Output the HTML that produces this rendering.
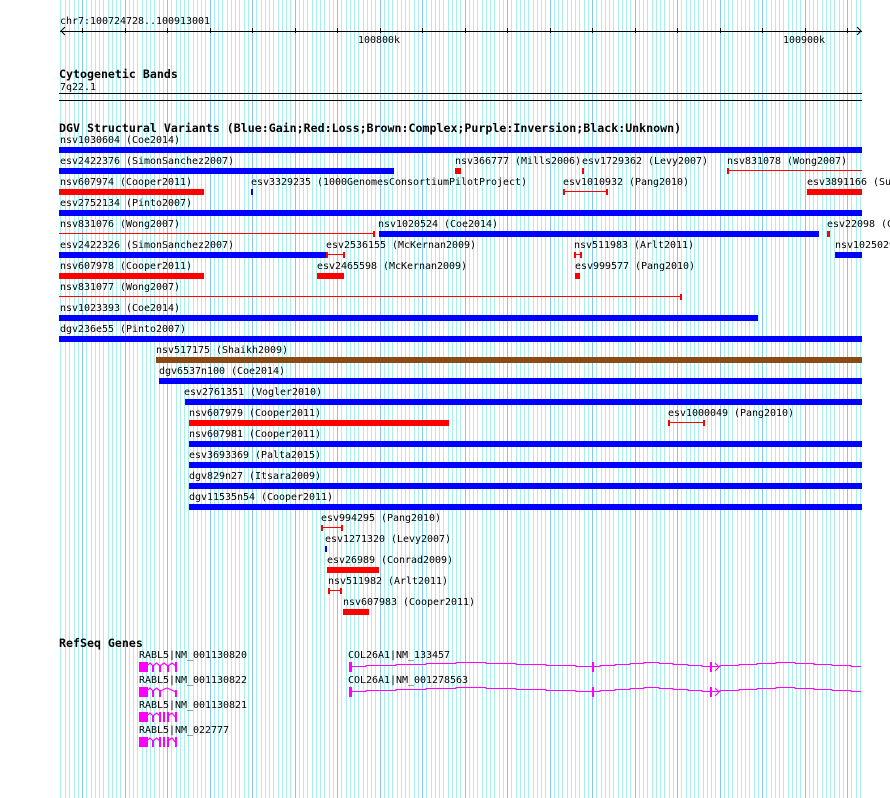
<!DOCTYPE html>
<html><head><meta charset="utf-8"><title>Genome tracks</title>
<style>
html,body{margin:0;padding:0;background:#fff;width:890px;height:798px;overflow:hidden}
svg{display:block}
text{font-family:"DejaVu Sans Mono","Liberation Mono",monospace;font-size:10px;letter-spacing:-.02px;fill:#000;white-space:pre}
text.b{font-weight:bold;font-size:11.6px;letter-spacing:.01px}
rect{shape-rendering:crispEdges}
.g{fill:none;stroke:#f0f;stroke-width:1;shape-rendering:crispEdges}
</style></head><body>
<svg xmlns="http://www.w3.org/2000/svg" width="890" height="798" viewBox="0 0 890 798">
<path fill="none" stroke="#aaeeee" stroke-width="1" shape-rendering="crispEdges" d="M60.5 0V798M65.5 0V798M69.5 0V798M74.5 0V798M78.5 0V798M86.5 0V798M91.5 0V798M95.5 0V798M99.5 0V798M103.5 0V798M108.5 0V798M112.5 0V798M116.5 0V798M120.5 0V798M129.5 0V798M133.5 0V798M137.5 0V798M142.5 0V798M146.5 0V798M150.5 0V798M154.5 0V798M159.5 0V798M163.5 0V798M171.5 0V798M176.5 0V798M180.5 0V798M184.5 0V798M188.5 0V798M193.5 0V798M197.5 0V798M201.5 0V798M205.5 0V798M214.5 0V798M218.5 0V798M222.5 0V798M227.5 0V798M231.5 0V798M235.5 0V798M239.5 0V798M244.5 0V798M248.5 0V798M256.5 0V798M261.5 0V798M265.5 0V798M269.5 0V798M273.5 0V798M278.5 0V798M282.5 0V798M286.5 0V798M290.5 0V798M299.5 0V798M303.5 0V798M307.5 0V798M312.5 0V798M316.5 0V798M320.5 0V798M324.5 0V798M329.5 0V798M333.5 0V798M341.5 0V798M346.5 0V798M350.5 0V798M354.5 0V798M358.5 0V798M363.5 0V798M367.5 0V798M371.5 0V798M375.5 0V798M384.5 0V798M388.5 0V798M392.5 0V798M397.5 0V798M401.5 0V798M405.5 0V798M409.5 0V798M414.5 0V798M418.5 0V798M426.5 0V798M431.5 0V798M435.5 0V798M439.5 0V798M443.5 0V798M448.5 0V798M452.5 0V798M456.5 0V798M460.5 0V798M469.5 0V798M473.5 0V798M477.5 0V798M482.5 0V798M486.5 0V798M490.5 0V798M494.5 0V798M499.5 0V798M503.5 0V798M511.5 0V798M516.5 0V798M520.5 0V798M524.5 0V798M528.5 0V798M533.5 0V798M537.5 0V798M541.5 0V798M545.5 0V798M554.5 0V798M558.5 0V798M562.5 0V798M567.5 0V798M571.5 0V798M575.5 0V798M579.5 0V798M584.5 0V798M588.5 0V798M596.5 0V798M601.5 0V798M605.5 0V798M609.5 0V798M613.5 0V798M618.5 0V798M622.5 0V798M626.5 0V798M630.5 0V798M639.5 0V798M643.5 0V798M647.5 0V798M652.5 0V798M656.5 0V798M660.5 0V798M664.5 0V798M669.5 0V798M673.5 0V798M681.5 0V798M686.5 0V798M690.5 0V798M694.5 0V798M698.5 0V798M703.5 0V798M707.5 0V798M711.5 0V798M715.5 0V798M724.5 0V798M728.5 0V798M732.5 0V798M737.5 0V798M741.5 0V798M745.5 0V798M749.5 0V798M754.5 0V798M758.5 0V798M766.5 0V798M771.5 0V798M775.5 0V798M779.5 0V798M783.5 0V798M788.5 0V798M792.5 0V798M796.5 0V798M800.5 0V798M809.5 0V798M813.5 0V798M817.5 0V798M822.5 0V798M826.5 0V798M830.5 0V798M834.5 0V798M839.5 0V798M843.5 0V798M851.5 0V798M856.5 0V798M860.5 0V798"/>
<path fill="none" stroke="#87c5f5" stroke-width="1" shape-rendering="crispEdges" d="M82.5 0V798M125.5 0V798M167.5 0V798M210.5 0V798M252.5 0V798M295.5 0V798M337.5 0V798M380.5 0V798M422.5 0V798M465.5 0V798M507.5 0V798M550.5 0V798M592.5 0V798M635.5 0V798M677.5 0V798M720.5 0V798M762.5 0V798M805.5 0V798M847.5 0V798"/>

<!-- axis -->
<text x="60" y="24">chr7:100724728..100913001</text>
<rect x="60" y="31" width="802" height="1" fill="#000"/>
<path d="M65 27L61 31L65 35M857 27L861 31L857 35" fill="none" stroke="#000" stroke-width="1"/>
<path d="M82.5 28v5M125.5 28v5M167.5 28v5M210.5 28v5M252.5 28v5M295.5 28v5M337.5 28v5M380.5 28v5M422.5 28v5M465.5 28v5M507.5 28v5M550.5 28v5M592.5 28v5M635.5 28v5M677.5 28v5M720.5 28v5M762.5 28v5M805.5 28v5M847.5 28v5" stroke="#000" stroke-width="1" shape-rendering="crispEdges"/>
<text x="358" y="43">100800k</text>
<text x="783" y="43">100900k</text>

<text class="b" x="59" y="78">Cytogenetic Bands</text>
<text x="60" y="90">7q22.1</text>
<rect x="59" y="93" width="803" height="1" fill="#000"/>
<rect x="59" y="100" width="803" height="1" fill="#000"/>
<text class="b" x="59" y="132">DGV Structural Variants (Blue:Gain;Red:Loss;Brown:Complex;Purple:Inversion;Black:Unknown)</text>

<!-- row 147 -->
<text x="60" y="143">nsv1030604 (Coe2014)</text>
<rect x="59" y="147" width="803" height="6" fill="#00f"/>
<!-- row 168 -->
<text x="60" y="164">esv2422376 (SimonSanchez2007)</text>
<rect x="59" y="168" width="335" height="6" fill="#00f"/>
<text x="455" y="164">nsv366777 (Mills2006)</text>
<rect x="455" y="168" width="6" height="6" fill="#f00"/>
<text x="582" y="164">esv1729362 (Levy2007)</text>
<rect x="582" y="168" width="2" height="6" fill="#f00"/>
<text x="727" y="164">nsv831078 (Wong2007)</text>
<rect x="727" y="168" width="2" height="6" fill="#f00"/>
<rect x="727" y="170" width="135" height="1" fill="#f00"/>
<!-- row 189 -->
<text x="60" y="185">nsv607974 (Cooper2011)</text>
<rect x="59" y="189" width="145" height="6" fill="#f00"/>
<text x="251" y="185">esv3329235 (1000GenomesConsortiumPilotProject)</text>
<rect x="251" y="189" width="2" height="6" fill="#00f"/>
<text x="563" y="185">esv1010932 (Pang2010)</text>
<rect x="563" y="189" width="2" height="6" fill="#f00"/>
<rect x="563" y="191" width="45" height="1" fill="#f00"/>
<rect x="606" y="189" width="2" height="6" fill="#f00"/>
<text x="807" y="185">esv3891166 (Su</text>
<rect x="807" y="189" width="55" height="6" fill="#f00"/>
<!-- row 210 -->
<text x="60" y="206">esv2752134 (Pinto2007)</text>
<rect x="59" y="210" width="803" height="6" fill="#00f"/>
<!-- row 231 -->
<text x="60" y="227">nsv831076 (Wong2007)</text>
<rect x="59" y="233" width="316" height="1" fill="#f00"/>
<rect x="373" y="231" width="2" height="6" fill="#f00"/>
<text x="378" y="227">nsv1020524 (Coe2014)</text>
<rect x="379" y="231" width="440" height="6" fill="#00f"/>
<text x="827" y="227">esv22098 (C</text>
<rect x="827" y="231" width="3" height="6" fill="#f00"/>
<!-- row 252 -->
<text x="60" y="248">esv2422326 (SimonSanchez2007)</text>
<rect x="59" y="252" width="267" height="6" fill="#00f"/>
<text x="326" y="248">esv2536155 (McKernan2009)</text>
<rect x="326" y="252" width="2" height="6" fill="#f00"/>
<rect x="326" y="254" width="19" height="1" fill="#f00"/>
<rect x="343" y="252" width="2" height="6" fill="#f00"/>
<text x="574" y="248">nsv511983 (Arlt2011)</text>
<rect x="574" y="252" width="2" height="6" fill="#f00"/>
<rect x="574" y="254" width="8" height="1" fill="#f00"/>
<rect x="580" y="252" width="2" height="6" fill="#f00"/>
<text x="835" y="248">nsv1025029</text>
<rect x="835" y="252" width="27" height="6" fill="#00f"/>
<!-- row 273 -->
<text x="60" y="269">nsv607978 (Cooper2011)</text>
<rect x="59" y="273" width="145" height="6" fill="#f00"/>
<text x="317" y="269">esv2465598 (McKernan2009)</text>
<rect x="317" y="273" width="27" height="6" fill="#f00"/>
<text x="575" y="269">esv999577 (Pang2010)</text>
<rect x="575" y="273" width="5" height="6" fill="#f00"/>
<!-- row 294 -->
<text x="60" y="290">nsv831077 (Wong2007)</text>
<rect x="59" y="296" width="623" height="1" fill="#f00"/>
<rect x="680" y="294" width="2" height="6" fill="#f00"/>
<!-- row 315 -->
<text x="60" y="311">nsv1023393 (Coe2014)</text>
<rect x="59" y="315" width="699" height="6" fill="#00f"/>
<!-- row 336 -->
<text x="60" y="332">dgv236e55 (Pinto2007)</text>
<rect x="59" y="336" width="803" height="6" fill="#00f"/>
<!-- row 357 -->
<text x="156" y="353">nsv517175 (Shaikh2009)</text>
<rect x="156" y="357" width="706" height="6" fill="#8b4a14"/>
<!-- row 378 -->
<text x="159" y="374">dgv6537n100 (Coe2014)</text>
<rect x="159" y="378" width="703" height="6" fill="#00f"/>
<!-- row 399 -->
<text x="184" y="395">esv2761351 (Vogler2010)</text>
<rect x="185" y="399" width="677" height="6" fill="#00f"/>
<!-- row 420 -->
<text x="189" y="416">nsv607979 (Cooper2011)</text>
<rect x="189" y="420" width="260" height="6" fill="#f00"/>
<text x="668" y="416">esv1000049 (Pang2010)</text>
<rect x="668" y="420" width="2" height="6" fill="#f00"/>
<rect x="668" y="422" width="37" height="1" fill="#f00"/>
<rect x="703" y="420" width="2" height="6" fill="#f00"/>
<!-- row 441..504 -->
<text x="189" y="437">nsv607981 (Cooper2011)</text>
<rect x="189" y="441" width="673" height="6" fill="#00f"/>
<text x="189" y="458">esv3693369 (Palta2015)</text>
<rect x="189" y="462" width="673" height="6" fill="#00f"/>
<text x="189" y="479">dgv829n27 (Itsara2009)</text>
<rect x="189" y="483" width="673" height="6" fill="#00f"/>
<text x="189" y="500">dgv11535n54 (Cooper2011)</text>
<rect x="189" y="504" width="673" height="6" fill="#00f"/>
<!-- row 525.. -->
<text x="321" y="521">esv994295 (Pang2010)</text>
<rect x="321" y="525" width="2" height="6" fill="#f00"/>
<rect x="321" y="527" width="22" height="1" fill="#f00"/>
<rect x="341" y="525" width="2" height="6" fill="#f00"/>
<text x="325" y="542">esv1271320 (Levy2007)</text>
<rect x="325" y="546" width="2" height="6" fill="#00f"/>
<text x="327" y="563">esv26989 (Conrad2009)</text>
<rect x="327" y="567" width="52" height="6" fill="#f00"/>
<text x="328" y="584">nsv511982 (Arlt2011)</text>
<rect x="328" y="588" width="2" height="6" fill="#f00"/>
<rect x="328" y="590" width="14" height="1" fill="#f00"/>
<rect x="340" y="588" width="2" height="6" fill="#f00"/>
<text x="343" y="605">nsv607983 (Cooper2011)</text>
<rect x="343" y="609" width="26" height="6" fill="#f00"/>

<!-- genes -->
<text class="b" x="59" y="647">RefSeq Genes</text>

<text x="139" y="658">RABL5|NM_001130820</text>
<text x="139" y="683">RABL5|NM_001130822</text>
<text x="139" y="708">RABL5|NM_001130821</text>
<text x="139" y="733">RABL5|NM_022777</text>

<g fill="#f0f">
<rect x="139" y="662" width="9" height="10"/><rect x="152" y="665" width="2" height="7"/><rect x="159" y="665" width="2" height="7"/><rect x="167" y="665" width="2" height="7"/><rect x="175" y="662" width="2" height="10"/>
<rect x="139" y="687" width="9" height="10"/><rect x="152" y="690" width="2" height="7"/><rect x="159" y="690" width="2" height="7"/><rect x="175" y="690" width="2" height="7"/>
<rect x="139" y="712" width="9" height="10"/><rect x="152" y="715" width="2" height="7"/><rect x="159" y="712" width="2" height="10"/><rect x="163" y="712" width="2" height="10"/><rect x="167" y="712" width="2" height="10"/><rect x="175" y="712" width="2" height="10"/>
<rect x="139" y="737" width="9" height="10"/><rect x="152" y="740" width="2" height="7"/><rect x="159" y="737" width="2" height="10"/><rect x="163" y="737" width="2" height="10"/><rect x="167" y="737" width="2" height="10"/><rect x="175" y="737" width="2" height="10"/>
</g>
<g fill="none" stroke="#f0f" stroke-width="1.2">
<path d="M148 665L150 663L153 666M153 666L156.5 663L160 666M160 666L164 663L168 666M168 666L172 663L176 666"/>
<path d="M148 690L150 688L153 691M153 691L156.5 688L160 691M160 691L167 688L176 692"/>
<path d="M148 715L150 713L153 716M153 716L156.5 713L160 716M168 716L172 713L176 718"/>
<path d="M148 740L150 738L153 741M153 741L156.5 738L160 741M168 741L172 738L176 743"/>
</g>

<text x="348" y="658">COL26A1|NM_133457</text>
<text x="348" y="683">COL26A1|NM_001278563</text>
<g>
<rect x="349" y="662" width="3" height="10" fill="#f0f"/>
<rect x="592" y="662" width="2" height="10" fill="#f0f"/>
<rect x="710" y="662" width="2" height="10" fill="#f0f"/>
<path class="g" d="M352 666.5H366V665.5H396V664.5H426V663.5H456V662.5H486V663.5H516V664.5H546V665.5H576V666.5H600V665.5H615V664.5H630V663.5H644V662.5H659V663.5H673V664.5H688V665.5H702V666.5H710M712 666.5H720V665.5H739V664.5H757V663.5H776V662.5H795V663.5H814V664.5H832V665.5H851V666.5H861"/>
<path d="M715 663L719 667L715 671" fill="none" stroke="#f0f" stroke-width="1"/>
</g>
<g>
<rect x="349" y="687" width="3" height="10" fill="#f0f"/>
<rect x="592" y="687" width="2" height="10" fill="#f0f"/>
<rect x="710" y="687" width="2" height="10" fill="#f0f"/>
<path class="g" d="M352 691.5H366V690.5H396V689.5H426V688.5H456V687.5H486V688.5H516V689.5H546V690.5H576V691.5H600V690.5H615V689.5H630V688.5H644V687.5H659V688.5H673V689.5H688V690.5H702V691.5H710M712 691.5H720V690.5H739V689.5H757V688.5H776V687.5H795V688.5H814V689.5H832V690.5H851V691.5H861"/>
<path d="M715 688L719 692L715 696" fill="none" stroke="#f0f" stroke-width="1"/>
</g>
</svg>
</body></html>
